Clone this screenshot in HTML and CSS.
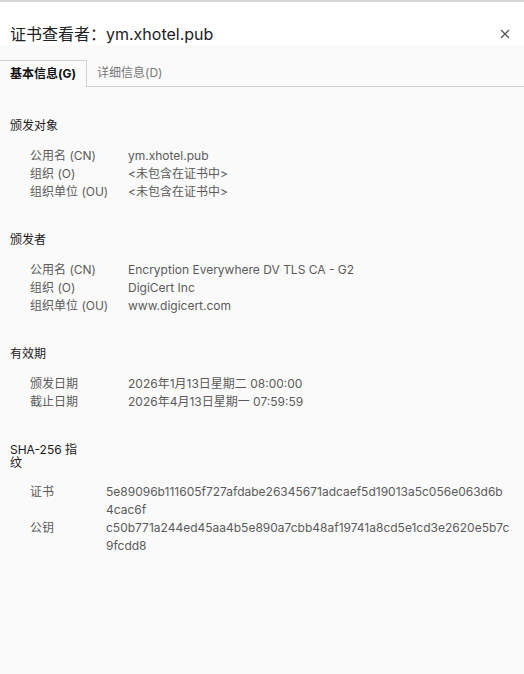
FILE: index.html
```html
<!DOCTYPE html>
<html lang="zh-CN">
<head>
  <meta charset="UTF-8">
  <meta name="viewport" content="width=device-width, initial-scale=1.0">
  <title>证书查看者</title>
  <link rel="stylesheet" href="styles.css">
</head>
<body>
  <div class="viewer">
    <div class="header">
      <h1 class="title">证书查看者：ym.xhotel.pub</h1>
      <button class="close" type="button" aria-label="关闭">
        <svg width="10" height="10" viewBox="0 0 10 10">
          <path d="M1 1 L9 9 M9 1 L1 9" stroke="#555" stroke-width="1.3" fill="none"/>
        </svg>
      </button>
    </div>

    <div class="tabs">
      <div class="tab active">基本信息(G)</div>
      <div class="tab">详细信息(D)</div>
    </div>

    <div class="content">
      <div class="section">
        <div class="section-title">颁发对象</div>
        <div class="rows">
          <div class="label">公用名 (CN)</div>
          <div class="value">ym.xhotel.pub</div>
          <div class="label">组织 (O)</div>
          <div class="value">&lt;未包含在证书中&gt;</div>
          <div class="label">组织单位 (OU)</div>
          <div class="value">&lt;未包含在证书中&gt;</div>
        </div>
      </div>

      <div class="section">
        <div class="section-title">颁发者</div>
        <div class="rows">
          <div class="label">公用名 (CN)</div>
          <div class="value">Encryption Everywhere DV TLS CA - G2</div>
          <div class="label">组织 (O)</div>
          <div class="value">DigiCert Inc</div>
          <div class="label">组织单位 (OU)</div>
          <div class="value">www.digicert.com</div>
        </div>
      </div>

      <div class="section">
        <div class="section-title">有效期</div>
        <div class="rows">
          <div class="label">颁发日期</div>
          <div class="value">2026年1月13日星期二 08:00:00</div>
          <div class="label">截止日期</div>
          <div class="value">2026年4月13日星期一 07:59:59</div>
        </div>
      </div>

      <div class="section">
        <div class="section-title narrow">SHA-256 指纹</div>
        <div class="rows hashes">
          <div class="label">证书</div>
          <div class="value">5e89096b111605f727afdabe26345671adcaef5d19013a5c056e063d6b4cac6f</div>
          <div class="label">公钥</div>
          <div class="value">c50b771a244ed45aa4b5e890a7cbb48af19741a8cd5e1cd3e2620e5b7c9fcdd8</div>
        </div>
      </div>
    </div>
  </div>
</body>
</html>
```

FILE: styles.css
```css
body {
  margin: 0;
  background-color: #fafafa;
  font-family: 'Inter', 'Noto Sans CJK SC', sans-serif;
  color: #1f1f1f;
}
.viewer {
  min-height: 674px;
  border-top: 2px solid #d6d6d6;
  box-sizing: border-box;
}
.header {
  background-color: #fff;
  height: 43px;
  display: flex;
  align-items: flex-start;
  justify-content: space-between;
  padding: 21px 10px 0 10px;
  box-sizing: border-box;
}
.title {
  margin: 0;
  font-size: 16px;
  font-weight: 400;
  line-height: 22px;
  color: #202124;
}
.close {
  border: none;
  background: none;
  padding: 0;
  margin: 6px 4px 0 0;
  width: 10px;
  height: 10px;
  display: flex;
}
.tabs {
  display: flex;
  padding-top: 15px;
  border-bottom: 1px solid #cfcfcf;
  background-color: #fafafa;
}
.tab {
  padding: 0 10px;
  height: 26px;
  line-height: 26px;
  font-size: 12px;
  color: #777;
}
.tab.active {
  color: #111;
  font-weight: 700;
  border-top: 1px solid #cfcfcf;
  border-right: 1px solid #cfcfcf;
  height: 25px;
  margin-bottom: -1px;
  padding-bottom: 1px;
  background-color: #fafafa;
}
.content {
  padding: 32px 10px 20px 10px;
}
.section {
  margin-bottom: 32px;
}
.section-title {
  font-size: 12px;
  line-height: 14px;
  color: #1a1a1a;
  margin-bottom: 14px;
}
.section-title.narrow {
  width: 72px;
  line-height: 13px;
}
.rows {
  display: grid;
  grid-template-columns: 98px 1fr;
  padding-left: 20px;
  font-size: 12px;
  line-height: 18px;
  color: #5a5a5a;
}
.rows.hashes {
  grid-template-columns: 76px 404px;
}
.hashes .value {
  word-break: break-all;
}
```
